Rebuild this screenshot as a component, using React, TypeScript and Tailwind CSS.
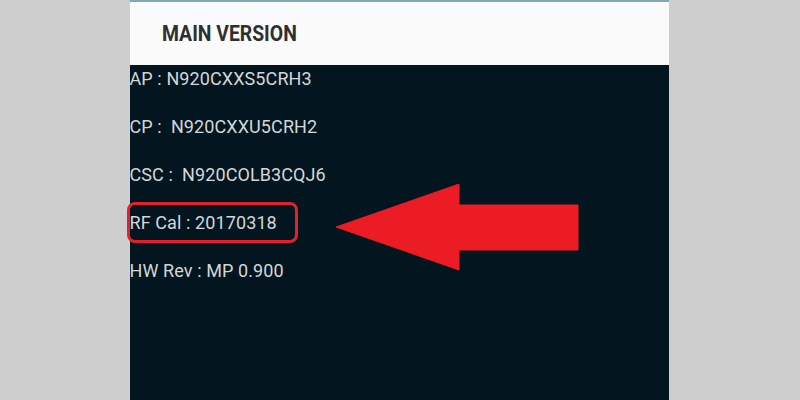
const rows = [
  "AP : N920CXXS5CRH3",
  "CP :  N920CXXU5CRH2",
  "CSC :  N920COLB3CQJ6",
  "RF Cal : 20170318",
  "HW Rev : MP 0.900",
];

export default function App() {
  return (
    <div className="w-[800px] h-[400px] bg-[#cecece] flex justify-center overflow-hidden">
      <div className="relative w-[539px] ml-[-2px] h-full flex flex-col bg-[#03151e]">
        <div className="h-[2px] bg-[#7fa8b8]" />
        <div className="h-[63px] bg-[#fafafa] flex items-center pl-[32px]">
          <h1
            className="inline-block origin-left scale-x-[0.88] text-[22px] font-bold text-[#2f2f2f]"
            style={{ fontFamily: "Roboto, sans-serif" }}
          >
            MAIN VERSION
          </h1>
        </div>
        <div
          className="flex flex-col pt-[2px] text-[18px] tracking-[0.1px] text-[#d3d7d9]"
          style={{ fontFamily: "Roboto, sans-serif" }}
        >
          {rows.map((r) => (
            <div key={r} className="h-[48px] leading-[24px] whitespace-pre">
              {r}
            </div>
          ))}
        </div>

        {/* highlight box */}
        <div className="absolute left-[-3px] top-[202px] w-[171px] h-[41px] rounded-[8px] border-[3px] border-[#e4202a]" />

        {/* arrow */}
        <svg
          className="absolute left-[206px] top-[184px]"
          width="243"
          height="87"
          viewBox="0 0 243 87"
        >
          <polygon
            points="0,43 123,0 123,21 242,21 242,66 123,66 123,86"
            fill="#ec1c24"
            strokeLinejoin="round"
            stroke="#ec1c24"
            strokeWidth="1"
          />
        </svg>
      </div>
    </div>
  );
}
